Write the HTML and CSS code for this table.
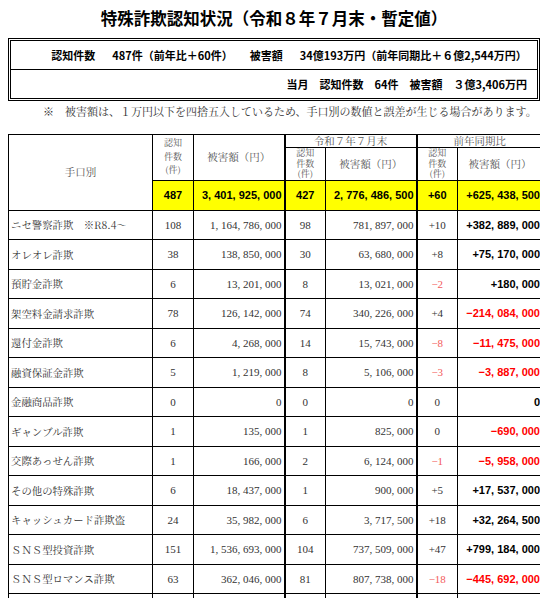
FILE: index.html
```html
<!DOCTYPE html>
<html lang="ja">
<head>
    <meta charset="UTF-8">
    <title>特殊詐欺認知状況</title>
    <link rel="stylesheet" href="styles.css">
</head>
<body>

<!--タイトル-->
<h1 class="title">特殊詐欺認知状況（令和８年７月末・暫定値）</h1>

<!--概要-->
<div class="summary">
    <div class="summary-row summary-total"><span class="gap">認知件数</span><span class="gap">487件（前年比＋60件）</span><span class="gap">被害額</span>34億193万円（前年同期比＋６億2,544万円）</div>
    <div class="summary-row summary-month">当月　認知件数　64件　被害額　３億3,406万円</div>
</div>
<p class="note">※　被害額は、１万円以下を四捨五入しているため、手口別の数値と誤差が生じる場合があります。</p>

<!--手口別-->
<div class="table-wrap">
<table class="stat">
    <colgroup>
        <col class="c-name">
        <col class="c-num">
        <col class="c-amt">
        <col class="c-num">
        <col class="c-amt">
        <col class="c-num">
        <col class="c-diff">
        <col class="c-more">
    </colgroup>
    <tr class="head1">
        <th rowspan="3" class="name-head">手口別</th>
        <th rowspan="2" class="small tall">認知<br>件数<br>(件)</th>
        <th rowspan="2">被害額（円）</th>
        <th colspan="2" class="sep">令和７年７月末</th>
        <th colspan="2" class="sep">前年同期比</th>
        <th rowspan="2"></th>
    </tr>
    <tr class="head2">
        <th class="small sep">認知<br>件数<br>(件)</th>
        <th>被害額（円）</th>
        <th class="small sep">認知<br>件数<br>(件)</th>
        <th>被害額（円）</th>
    </tr>
    <tr class="total">
        <td class="num">487</td>
        <td class="amt">3, 401, 925, 000</td>
        <td class="num sep">427</td>
        <td class="amt">2, 776, 486, 500</td>
        <td class="num sep">+60</td>
        <td class="amt">+625, 438, 500</td>
        <td class="more"></td>
    </tr>
    <tr>
        <td class="name">ニセ警察詐欺　※R8.4～</td>
        <td class="num">108</td><td class="amt">1, 164, 786, 000</td>
        <td class="num sep">98</td><td class="amt">781, 897, 000</td>
        <td class="num sep">+10</td><td class="diff">+382, 889, 000</td><td></td>
    </tr>
    <tr>
        <td class="name">オレオレ詐欺</td>
        <td class="num">38</td><td class="amt">138, 850, 000</td>
        <td class="num sep">30</td><td class="amt">63, 680, 000</td>
        <td class="num sep">+8</td><td class="diff">+75, 170, 000</td><td></td>
    </tr>
    <tr>
        <td class="name">預貯金詐欺</td>
        <td class="num">6</td><td class="amt">13, 201, 000</td>
        <td class="num sep">8</td><td class="amt">13, 021, 000</td>
        <td class="num sep minus">−2</td><td class="diff">+180, 000</td><td></td>
    </tr>
    <tr>
        <td class="name">架空料金請求詐欺</td>
        <td class="num">78</td><td class="amt">126, 142, 000</td>
        <td class="num sep">74</td><td class="amt">340, 226, 000</td>
        <td class="num sep">+4</td><td class="diff minus">−214, 084, 000</td><td></td>
    </tr>
    <tr>
        <td class="name">還付金詐欺</td>
        <td class="num">6</td><td class="amt">4, 268, 000</td>
        <td class="num sep">14</td><td class="amt">15, 743, 000</td>
        <td class="num sep minus">−8</td><td class="diff minus">−11, 475, 000</td><td></td>
    </tr>
    <tr>
        <td class="name">融資保証金詐欺</td>
        <td class="num">5</td><td class="amt">1, 219, 000</td>
        <td class="num sep">8</td><td class="amt">5, 106, 000</td>
        <td class="num sep minus">−3</td><td class="diff minus">−3, 887, 000</td><td></td>
    </tr>
    <tr>
        <td class="name">金融商品詐欺</td>
        <td class="num">0</td><td class="amt">0</td>
        <td class="num sep">0</td><td class="amt">0</td>
        <td class="num sep">0</td><td class="diff">0</td><td></td>
    </tr>
    <tr>
        <td class="name">ギャンブル詐欺</td>
        <td class="num">1</td><td class="amt">135, 000</td>
        <td class="num sep">1</td><td class="amt">825, 000</td>
        <td class="num sep">0</td><td class="diff minus">−690, 000</td><td></td>
    </tr>
    <tr>
        <td class="name">交際あっせん詐欺</td>
        <td class="num">1</td><td class="amt">166, 000</td>
        <td class="num sep">2</td><td class="amt">6, 124, 000</td>
        <td class="num sep minus">−1</td><td class="diff minus">−5, 958, 000</td><td></td>
    </tr>
    <tr>
        <td class="name">その他の特殊詐欺</td>
        <td class="num">6</td><td class="amt">18, 437, 000</td>
        <td class="num sep">1</td><td class="amt">900, 000</td>
        <td class="num sep">+5</td><td class="diff">+17, 537, 000</td><td></td>
    </tr>
    <tr>
        <td class="name">キャッシュカード詐欺盗</td>
        <td class="num">24</td><td class="amt">35, 982, 000</td>
        <td class="num sep">6</td><td class="amt">3, 717, 500</td>
        <td class="num sep">+18</td><td class="diff">+32, 264, 500</td><td></td>
    </tr>
    <tr>
        <td class="name">ＳＮＳ型投資詐欺</td>
        <td class="num">151</td><td class="amt">1, 536, 693, 000</td>
        <td class="num sep">104</td><td class="amt">737, 509, 000</td>
        <td class="num sep">+47</td><td class="diff">+799, 184, 000</td><td></td>
    </tr>
    <tr>
        <td class="name">ＳＮＳ型ロマンス詐欺</td>
        <td class="num">63</td><td class="amt">362, 046, 000</td>
        <td class="num sep">81</td><td class="amt">807, 738, 000</td>
        <td class="num sep minus">−18</td><td class="diff minus">−445, 692, 000</td><td></td>
    </tr>
    <tr>
        <td class="name"></td>
        <td class="num"></td><td class="amt"></td>
        <td class="num sep"></td><td class="amt"></td>
        <td class="num sep"></td><td class="diff"></td><td></td>
    </tr>
</table>
</div>

</body>
</html>
```

FILE: styles.css
```css
html, body{ overflow: hidden;}
body{ margin: 8px; background: #fff; color: #222; font-family: "Liberation Serif", "Noto Serif CJK JP", "Noto Sans CJK JP", serif;}
.title{ margin: 0; height: 20px; line-height: 20px; text-align: center; font-size: 16.5px; font-weight: bold; font-family: "Noto Sans CJK JP", sans-serif; color: #000;}
.summary{ margin-top: 10px; border: 3px double #000; font-family: "Noto Sans CJK JP", sans-serif; font-weight: bold; font-size: 11px; color: #000;}
.summary-row{ height: 28px; line-height: 28px;}
.summary-total{ text-align: center; padding-left: 30px; border-bottom: 1px solid #000;}
.summary-total .gap{ margin-right: 17px;}
.summary-month{ text-align: right; padding-right: 10px;}
.note{ margin: 2px 0 0; height: 16px; line-height: 16px; padding-left: 35px; font-size: 11px; color: #333; font-family: "Noto Serif CJK JP", "Noto Sans CJK JP", serif; white-space: nowrap;}

.table-wrap{ margin-top: 15px; width: 600px;}
.stat{ border-collapse: collapse; table-layout: fixed; width: 594px; color: #333;}
.c-name{ width: 144px;}
.c-num{ width: 41px;}
.c-amt{ width: 91px;}
.c-diff{ width: 85px;}
.c-more{ width: 60px;}
.stat th, .stat td{ border: 1px solid #000; padding: 0 2px; overflow: hidden; white-space: nowrap;}
.stat th{ font-weight: normal; color: #555; font-size: 10.5px; font-family: "Noto Serif CJK JP", "Noto Sans CJK JP", serif;}
.stat .sep{ border-left: 2px solid #000;}
.head1 th{ height: 12px; line-height: 12px;}
.head2 th{ height: 31px;}
.stat th.small{ font-size: 9px; line-height: 10.5px;}
.stat th.tall{ line-height: 13.5px; vertical-align: top; padding-top: 1px;}
.name-head{ color: #444;}
.stat td{ height: 28.5px; font-size: 11px;}
.name{ text-align: left; font-size: 10.4px !important; padding-left: 2px; font-family: "Noto Serif CJK JP", "Noto Sans CJK JP", serif;}
.num{ text-align: center;}
.amt{ text-align: right;}
.diff{ text-align: right; font-family: "Liberation Sans", sans-serif; font-weight: bold; color: #000;}
.minus{ color: #f35b5b;}
.diff.minus{ color: #f00;}

.total td{ background: #ff0; font-family: "Liberation Sans", sans-serif; font-weight: bold; color: #000; height: 29px;}
.total td.more{ background: #fff;}
```
